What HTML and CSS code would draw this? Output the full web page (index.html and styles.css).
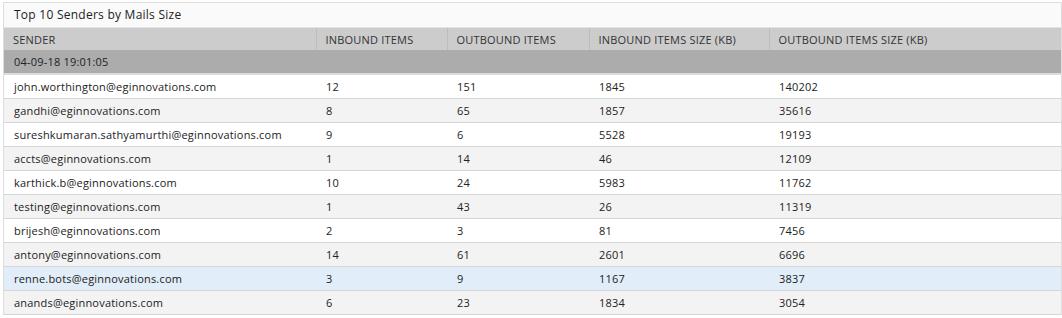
FILE: index.html
```html
<!DOCTYPE html>
<html>
<head>
<meta charset="utf-8">
<link rel="stylesheet" href="styles.css">
</head>
<body>
<div class="panel">
  <div class="title">Top 10 Senders by Mails Size</div>
  <table class="grid">
    <colgroup>
      <col class="c1"><col class="c2"><col class="c3"><col class="c4"><col class="c5">
    </colgroup>
    <thead>
      <tr>
        <th>SENDER</th>
        <th>INBOUND ITEMS</th>
        <th>OUTBOUND ITEMS</th>
        <th>INBOUND ITEMS SIZE (KB)</th>
        <th>OUTBOUND ITEMS SIZE (KB)</th>
      </tr>
    </thead>
    <tbody>
      <tr class="group"><td colspan="5">04-09-18 19:01:05</td></tr>
      <tr><td>john.worthington@eginnovations.com</td><td>12</td><td>151</td><td>1845</td><td>140202</td></tr>
      <tr class="alt"><td>gandhi@eginnovations.com</td><td>8</td><td>65</td><td>1857</td><td>35616</td></tr>
      <tr><td>sureshkumaran.sathyamurthi@eginnovations.com</td><td>9</td><td>6</td><td>5528</td><td>19193</td></tr>
      <tr class="alt"><td>accts@eginnovations.com</td><td>1</td><td>14</td><td>46</td><td>12109</td></tr>
      <tr><td>karthick.b@eginnovations.com</td><td>10</td><td>24</td><td>5983</td><td>11762</td></tr>
      <tr class="alt"><td>testing@eginnovations.com</td><td>1</td><td>43</td><td>26</td><td>11319</td></tr>
      <tr><td>brijesh@eginnovations.com</td><td>2</td><td>3</td><td>81</td><td>7456</td></tr>
      <tr class="alt"><td>antony@eginnovations.com</td><td>14</td><td>61</td><td>2601</td><td>6696</td></tr>
      <tr class="hover"><td>renne.bots@eginnovations.com</td><td>3</td><td>9</td><td>1167</td><td>3837</td></tr>
      <tr class="alt"><td>anands@eginnovations.com</td><td>6</td><td>23</td><td>1834</td><td>3054</td></tr>
    </tbody>
  </table>
</div>
</body>
</html>
```
FILE: styles.css
```css
html, body {
  margin: 0;
  padding: 0;
  background: #ffffff;
}
body {
  padding: 2px 2px 0 3px;
  font-family: "Segoe UI", "Open Sans", "Noto Sans", "DejaVu Sans", sans-serif;
  color: #222;
}
.panel {
  width: 1057px;
  border: 1px solid #dedede;
  border-bottom: none;
  background: #fafafa;
}
.title {
  height: 24px;
  line-height: 24px;
  padding-left: 10px;
  font-size: 12px;
  letter-spacing: 0.25px;
  color: #222;
  background: #fafafa;
}
.grid {
  width: 100%;
  border-collapse: collapse;
  table-layout: fixed;
  font-size: 11px;
  letter-spacing: 0.2px;
}
.c1 { width: 312px; }
.c2 { width: 131px; }
.c3 { width: 142px; }
.c4 { width: 180px; }
.c5 { width: auto; }
.grid th {
  height: 22px;
  padding: 0 0 0 9px;
  text-align: left;
  font-weight: normal;
  color: #333;
  background: #cccccc;
  border-left: 1px solid #bdbdbd;
  border-top: 1px solid #e3e3e3;
  white-space: nowrap;
}
.grid th:first-child {
  border-left: none;
}
.grid td {
  height: 23px;
  padding: 0 0 0 10px;
  border-bottom: 1px solid #d6d6d6;
  background: #ffffff;
  white-space: nowrap;
  overflow: hidden;
}
.grid tr.alt td {
  background: #f3f3f3;
}
.grid tr.hover td {
  background: #e1edf8;
}
.grid tr.group td {
  height: 23px;
  background: #acacac;
  border-bottom: 2px solid #dcdcdc;
  padding-left: 10px;
  color: #222;
}
```
